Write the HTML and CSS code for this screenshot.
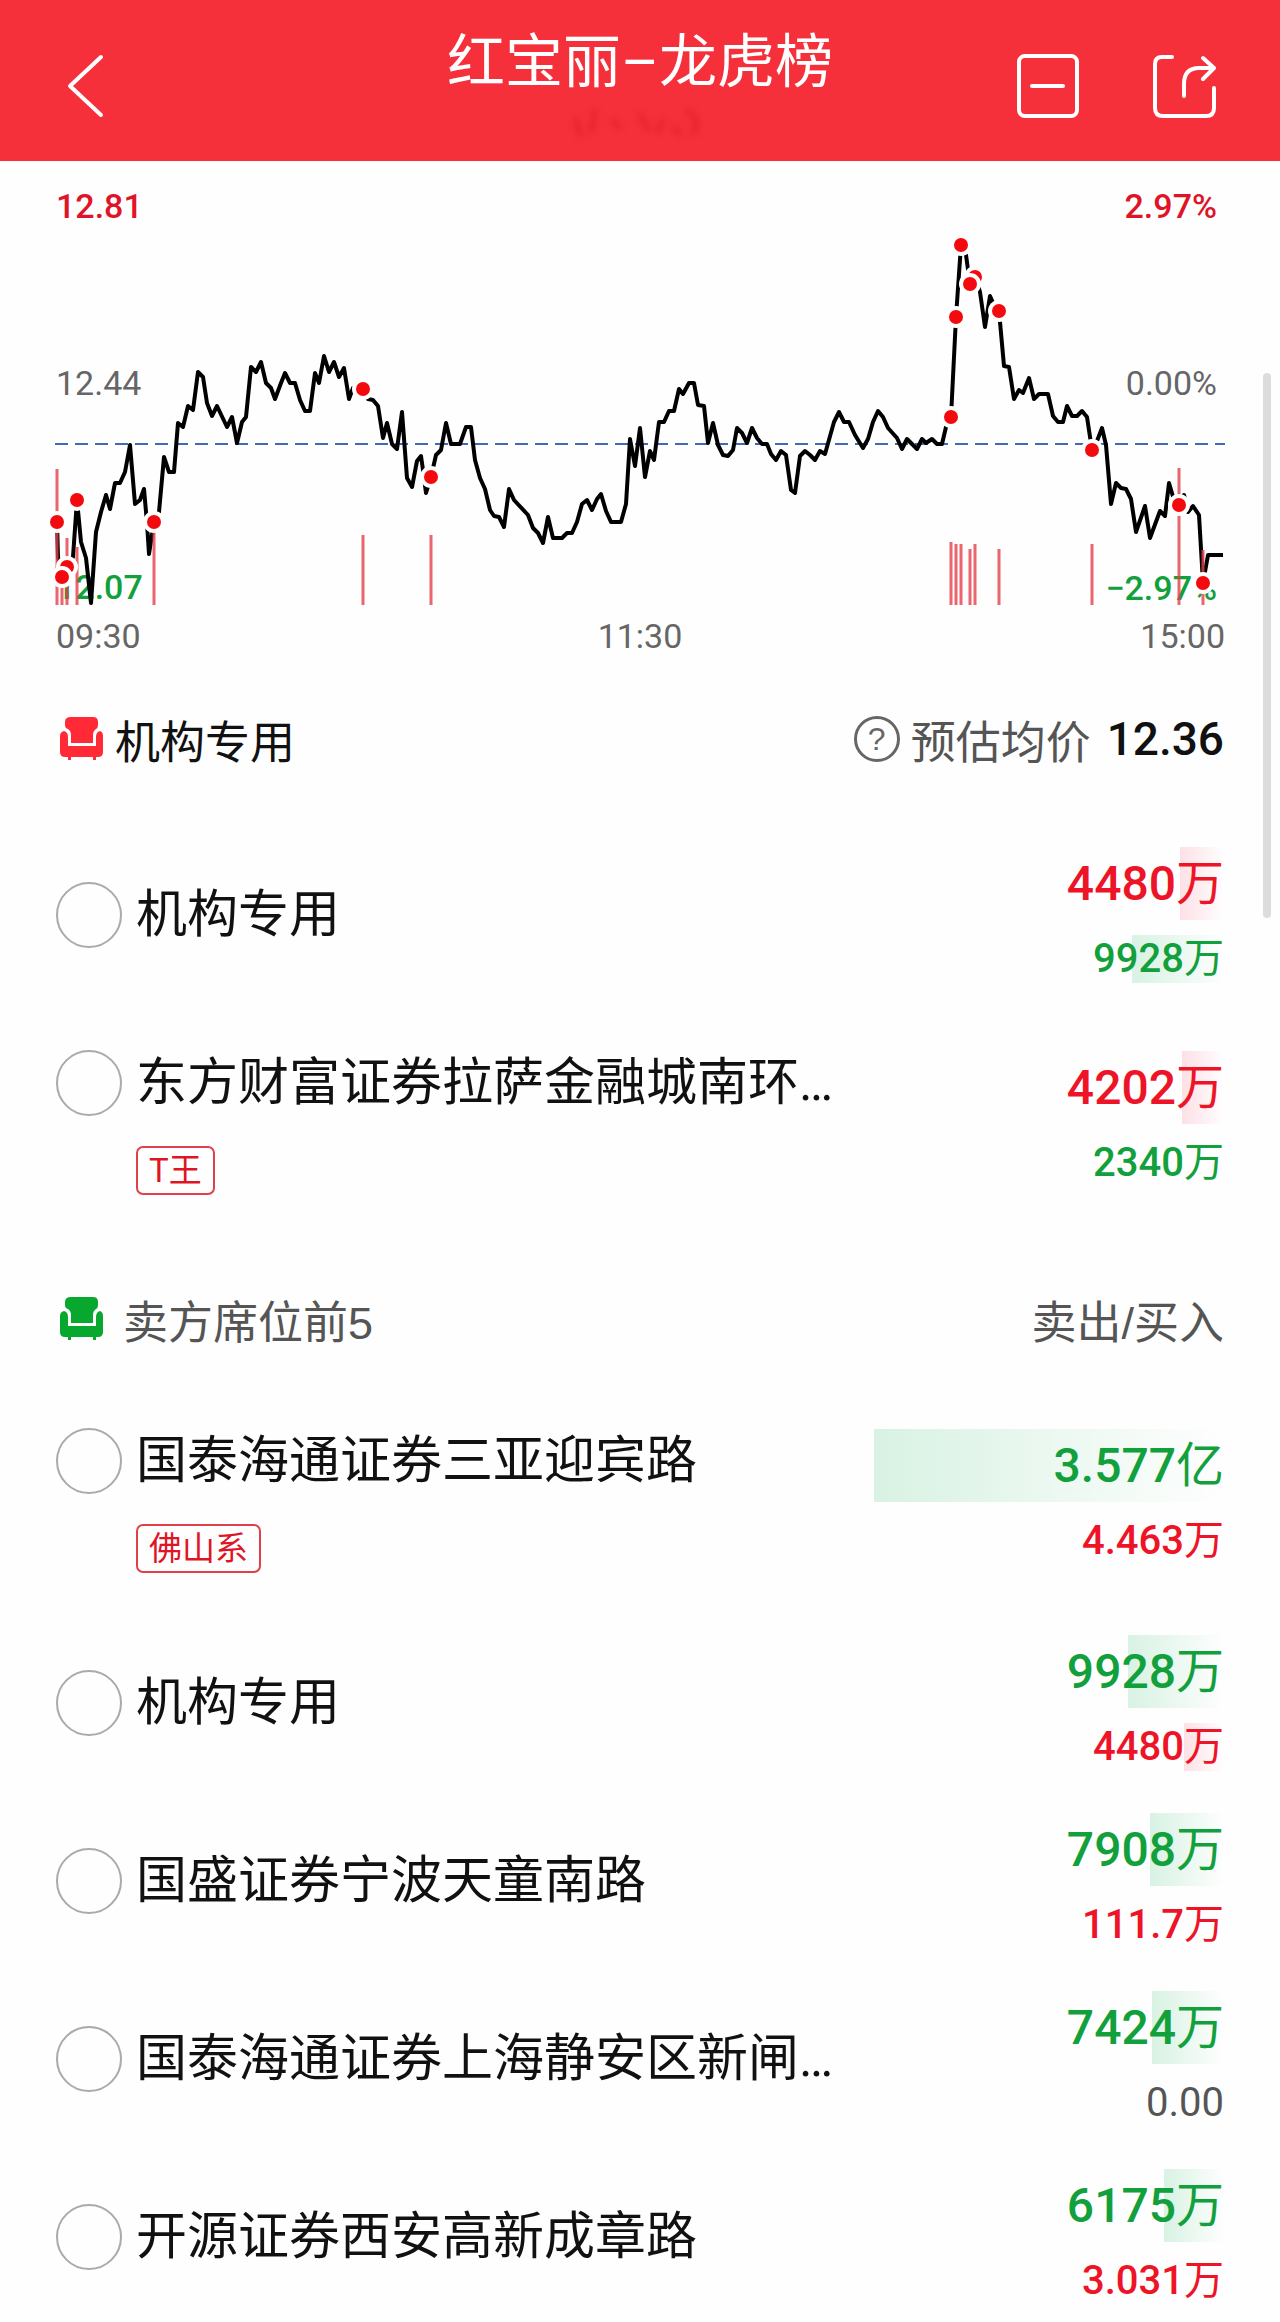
FILE: index.html
```html
<!DOCTYPE html>
<html lang="zh-CN">
<head>
<meta charset="utf-8">
<meta name="viewport" content="width=device-width, initial-scale=1">
<title>红宝丽–龙虎榜</title>
<link rel="stylesheet" href="styles.css">
</head>
<body>
<header class="topbar">
  <button class="icon-btn" type="button" aria-label="返回">
    <svg width="40" height="64" viewBox="0 0 40 64" fill="none" stroke="currentColor" stroke-width="4" stroke-linecap="round" stroke-linejoin="round"><path d="M37 3L6 32L37 61"/></svg>
  </button>
  <div class="heading">
    <h1 class="title">红宝丽–龙虎榜</h1>
    <svg class="smudge" width="150" height="47" viewBox="0 0 150 47" fill="none" stroke-width="5" aria-hidden="true"><path d="M10 14L16 34M30 6L26 30M46 16L56 26M74 10L84 28M98 16L92 30M122 6L132 18L128 32M108 24L116 32"/></svg>
  </div>
  <div class="actions">
    <button class="icon-btn" type="button" aria-label="收起">
      <svg width="64" height="64" viewBox="0 0 64 64" fill="none" stroke="currentColor" stroke-width="4" stroke-linecap="round"><rect x="3" y="2" width="58" height="60" rx="6"/><path d="M16 32H47"/></svg>
    </button>
    <button class="icon-btn" type="button" aria-label="分享">
      <svg width="64" height="64" viewBox="0 0 64 64" fill="none" stroke="currentColor" stroke-width="4" stroke-linecap="round" stroke-linejoin="round"><path d="M20 3H10Q3 3 3 10V54Q3 62 11 62H54Q62 62 62 54V34"/><path d="M32 42V30Q32 14 47 14H61M51 4L62 14L51 25"/></svg>
    </button>
  </div>
</header>

<main>
  <svg class="chart" viewBox="0 -9 1280 513" role="img" aria-label="分时走势">
    <g class="axis">
      <text class="up" x="56" y="48">12.81</text>
      <text x="56" y="225">12.44</text>
      <text class="down" x="56" y="429">12.07</text>
      <text x="56" y="478">09:30</text>
      <text x="640" y="478" text-anchor="middle">11:30</text>
      <g text-anchor="end">
        <text class="up" x="1217" y="48">2.97%</text>
        <text x="1217" y="225">0.00%</text>
        <text class="down" x="1217" y="430">−2.97%</text>
        <text x="1225" y="478">15:00</text>
      </g>
    </g>
    <path class="base" d="M55 274H1225"/>
    <polyline class="price" points="57,352 58,387 62,407 67,397 73,387 77,330 81,372 86,388 91,433 96,362 101,342 106,325 110,339 115,313 120,313 125,302 130,275 135,334 140,330 144,319 147,353 149,384 154,352 159,342 164,287 169,302 174,302 178,253 183,257 188,236 193,240 198,202 203,207 207,233 212,246 217,236 227,257 232,247 237,273 242,252 246,247 251,197 256,202 261,192 266,213 271,218 275,229 281,213 285,203 290,213 295,213 300,230 305,241 310,241 315,203 319,213 324,186 329,202 334,192 339,207 344,198 349,229 353,218 363,219 368,229 373,230 378,236 383,268 387,253 392,274 397,279 402,242 407,308 412,317 417,291 421,286 423,300 426,323 431,307 436,285 441,280 446,253 451,274 460,274 466,257 471,257 475,290 480,308 485,319 490,340 494,346 499,347 504,357 509,319 514,330 528,345 533,358 538,363 543,373 548,347 553,368 562,368 567,363 572,363 577,352 582,334 587,330 592,340 597,329 601,324 606,341 611,352 621,352 626,334 630,269 635,296 640,258 645,307 650,281 654,290 659,252 664,252 669,241 674,241 679,219 683,224 689,213 694,213 698,235 704,236 708,273 713,253 718,275 723,285 728,286 733,280 737,258 742,263 747,273 752,258 757,268 762,274 767,274 771,284 776,290 781,281 786,285 791,320 795,323 800,286 805,281 810,285 815,290 820,281 825,284 834,252 839,242 844,252 849,252 855,265 863,278 868,269 873,252 878,241 883,247 888,258 897,268 902,279 907,269 917,279 922,269 926,273 932,269 937,274 942,274 946,257 951,247 956,147 961,75 966,85 970,114 975,107 980,122 985,157 990,126 994,135 999,141 1004,196 1009,197 1014,229 1019,220 1023,223 1029,208 1034,229 1039,224 1048,224 1053,246 1058,252 1063,252 1067,236 1072,246 1077,246 1082,241 1087,247 1092,280 1097,271 1102,258 1106,275 1111,334 1116,313 1121,318 1126,319 1131,329 1136,362 1145,336 1150,368 1160,341 1165,346 1169,313 1174,330 1179,335 1184,325 1188,342 1193,336 1199,345 1203,413 1208,385 1223,385"/>
    <path class="marks" d="M57 299V435M62 407V435M67 368V435M77 377V435M154 352V435M363 365V435M431 365V435M951 372V435M956 374V435M961 374V435M970 379V435M975 374V435M999 379V435M1092 374V435M1179 298V435M1203 380V435"/>
    <g class="dots">
      <circle cx="57" cy="352" r="9"/><circle cx="67" cy="397" r="9"/><circle cx="62" cy="407" r="9"/><circle cx="77" cy="330" r="9"/><circle cx="154" cy="352" r="9"/><circle cx="363" cy="219" r="9"/><circle cx="431" cy="307" r="9"/><circle cx="951" cy="247" r="9"/><circle cx="956" cy="147" r="9"/><circle cx="961" cy="75" r="9"/><circle cx="975" cy="107" r="9"/><circle cx="970" cy="114" r="9"/><circle cx="999" cy="141" r="9"/><circle cx="1092" cy="280" r="9"/><circle cx="1179" cy="335" r="9"/><circle cx="1203" cy="413" r="9"/>
    </g>
  </svg>

  <section class="board board-buy">
    <div class="board-head">
      <svg class="seat up" width="44" height="44" viewBox="0 0 44 44" fill="currentColor" aria-hidden="true"><path d="M11 0H33Q38 0 38 5V8Q38 11 36 12Q33 14 33 18V26H11V18Q11 14 8 12Q5 11 5 8V5Q5 0 11 0Z"/><path d="M4 14Q8 15 8 20V29H36V20Q36 15 40 14Q43 15 43 19V35Q43 40 38 40H36V43H33V40H11V43H8V40H5Q0 40 0 35V19Q0 15 4 14Z"/></svg>
      <h2 class="board-title">机构专用</h2>
      <button class="help" type="button" aria-label="说明">?</button>
      <span class="muted">预估均价</span>
      <strong class="avg">12.36</strong>
    </div>
    <ul class="rows">
      <li class="row">
        <div class="who"><input class="pick" type="radio" name="seat" id="s1"><label class="name" for="s1">机构专用</label></div>
        <div class="amounts"><span class="amount up" style="--bar:44px">4480<span class="unit">万</span></span><span class="amount small down" style="--bar:92px">9928<span class="unit">万</span></span></div>
      </li>
      <li class="row tagged">
        <div class="who"><input class="pick" type="radio" name="seat" id="s2"><label class="name" for="s2">东方财富证券拉萨金融城南环…</label><span class="tag">T王</span></div>
        <div class="amounts"><span class="amount up" style="--bar:42px">4202<span class="unit">万</span></span><span class="amount small down">2340<span class="unit">万</span></span></div>
      </li>
    </ul>
  </section>

  <section class="board board-sell">
    <div class="board-head">
      <svg class="seat down" width="44" height="44" viewBox="0 0 44 44" fill="currentColor" aria-hidden="true"><path d="M11 0H33Q38 0 38 5V8Q38 11 36 12Q33 14 33 18V26H11V18Q11 14 8 12Q5 11 5 8V5Q5 0 11 0Z"/><path d="M4 14Q8 15 8 20V29H36V20Q36 15 40 14Q43 15 43 19V35Q43 40 38 40H36V43H33V40H11V43H8V40H5Q0 40 0 35V19Q0 15 4 14Z"/></svg>
      <h2 class="board-title muted">卖方席位前5</h2>
      <span class="muted">卖出/买入</span>
    </div>
    <ul class="rows">
      <li class="row tagged">
        <div class="who"><input class="pick" type="radio" name="seat" id="s3"><label class="name" for="s3">国泰海通证券三亚迎宾路</label><span class="tag">佛山系</span></div>
        <div class="amounts"><span class="amount down" style="--bar:350px">3.577<span class="unit">亿</span></span><span class="amount small up">4.463<span class="unit">万</span></span></div>
      </li>
      <li class="row">
        <div class="who"><input class="pick" type="radio" name="seat" id="s4"><label class="name" for="s4">机构专用</label></div>
        <div class="amounts"><span class="amount down" style="--bar:96px">9928<span class="unit">万</span></span><span class="amount small up" style="--bar:40px">4480<span class="unit">万</span></span></div>
      </li>
      <li class="row">
        <div class="who"><input class="pick" type="radio" name="seat" id="s5"><label class="name" for="s5">国盛证券宁波天童南路</label></div>
        <div class="amounts"><span class="amount down" style="--bar:74px">7908<span class="unit">万</span></span><span class="amount small up">111.7<span class="unit">万</span></span></div>
      </li>
      <li class="row">
        <div class="who"><input class="pick" type="radio" name="seat" id="s6"><label class="name" for="s6">国泰海通证券上海静安区新闸…</label></div>
        <div class="amounts"><span class="amount down" style="--bar:72px">7424<span class="unit">万</span></span><span class="amount small zero muted">0.00</span></div>
      </li>
      <li class="row">
        <div class="who"><input class="pick" type="radio" name="seat" id="s7"><label class="name" for="s7">开源证券西安高新成章路</label></div>
        <div class="amounts"><span class="amount down" style="--bar:60px">6175<span class="unit">万</span></span><span class="amount small up">3.031<span class="unit">万</span></span></div>
      </li>
    </ul>
  </section>
</main>
<div class="scroll-thumb" aria-hidden="true"></div>
</body>
</html>
```
FILE: styles.css
```css
* { box-sizing: border-box; }

body {
  position: relative;
  margin: 0;
  background: #fefefe;
  color: #111;
  font-family: Roboto, "Noto Sans CJK SC", sans-serif;
}

h1, h2, ul { margin: 0; padding: 0; font-weight: 400; }
ul { list-style: none; }
button { padding: 0; border: 0; background: none; color: inherit; font: inherit; }
svg { display: block; }

.up { color: #ee1428; }
.down { color: #12a03c; }
.muted { color: #555; }

/* Top bar */
.topbar {
  display: grid;
  grid-template-columns: 1fr auto 1fr;
  align-items: center;
  padding: 21px 64px 11px;
  background: #f5303b;
  color: #fff;
}
.heading { display: flex; flex-direction: column; align-items: center; }
.title { font-size: 58px; line-height: 82px; }
.smudge { stroke: #d8161f; opacity: .5; filter: blur(3px); }
.icon-btn { justify-self: start; }
.actions { display: flex; justify-content: flex-end; gap: 72px; }

/* Intraday chart */
.chart { width: 100%; height: auto; }
.axis { font-size: 34px; fill: #666; }
.axis .up { fill: #e01428; font-weight: 500; }
.axis .down { fill: #12a03c; font-weight: 500; }
.base { stroke: #4468b8; stroke-width: 2; stroke-dasharray: 13 7; }
.price { fill: none; stroke: #000; stroke-width: 4; stroke-linejoin: round; }
.marks { fill: none; stroke: #e4404a; stroke-width: 3; opacity: .8; }
.dots { fill: #f40a0e; stroke: #fff; stroke-width: 4; }

/* Seat boards */
.board { padding: 0 56px; }
.board-buy .rows { padding-top: 28px; }
.board-sell { padding-top: 14px; }
.board-sell .rows { padding-top: 4px; }
.board-head {
  display: flex;
  align-items: center;
  min-height: 130px;
  font-family: "Liberation Sans", "Noto Sans CJK SC", sans-serif;
  font-size: 45px;
}
.seat { flex: none; margin: 0 11px 0 4px; }
.board-sell .seat { margin-right: 19px; }
.seat.up { color: #ff2a36; }
.seat.down { color: #08a82e; }
.board-title { flex: 1; font-size: 45px; }
.help {
  width: 46px;
  height: 46px;
  margin-right: 11px;
  border: 3px solid #666;
  border-radius: 50%;
  color: #666;
  font-size: 32px;
  line-height: 40px;
}
.avg { margin-left: 16px; font-family: Roboto, sans-serif; font-size: 46px; font-weight: 500; }

.row {
  display: flex;
  justify-content: space-between;
  align-items: center;
  padding: 14px 0;
}
.row:last-child { padding-bottom: 0; }
.who {
  display: grid;
  grid-template-columns: 66px auto;
  column-gap: 14px;
  align-items: center;
  padding-bottom: 12px;
}
.pick {
  appearance: none;
  width: 66px;
  height: 66px;
  margin: 0;
  border: 2px solid #aaa;
  border-radius: 50%;
}
.pick:checked { border: 20px solid #f5303b; }
.name { font-size: 51px; line-height: 66px; white-space: nowrap; }
.tag {
  grid-column: 2;
  justify-self: start;
  margin-top: 30px;
  padding: 0 11px;
  border: 2px solid #e0404a;
  border-radius: 7px;
  color: #e01424;
  font-size: 33px;
  line-height: 45px;
}
.row.tagged { align-items: flex-start; padding: 40px 0 42px; }
.board-buy .row.tagged { padding-bottom: 40px; }
.tagged .who { padding-bottom: 0; }

.amounts { display: flex; flex-direction: column; flex: none; }
.amount {
  --bar: 0px;
  width: 350px;
  background: linear-gradient(to right, #d8f2e3, #fefefe) no-repeat right center / var(--bar) 73px;
  font-size: 48px;
  font-weight: 500;
  line-height: 75px;
  text-align: right;
}
.amount.up { background-image: linear-gradient(to right, #fde0e6, #fefefe); }
.small { background-size: var(--bar) 48px; font-size: 40px; }
.unit, .zero { font-weight: 400; }

.scroll-thumb {
  position: absolute;
  top: 373px;
  right: 9px;
  width: 8px;
  height: 545px;
  border-radius: 4px;
  background: #dcdcdc;
}
```
